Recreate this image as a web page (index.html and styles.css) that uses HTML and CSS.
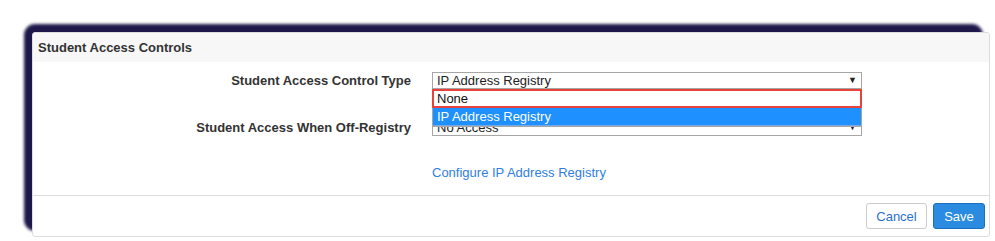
FILE: index.html
```html
<!DOCTYPE html>
<html>
<head>
<meta charset="utf-8">
<link rel="stylesheet" href="styles.css">
</head>
<body>
<div class="stage">
  <div class="panel">
    <div class="panel-heading">Student Access Controls</div>
    <div class="panel-body">
      <div class="form-row">
        <label class="form-label">Student Access Control Type</label>
        <div class="field">
          <div class="select">
            <span class="select-value">IP Address Registry</span>
            <span class="caret">▼</span>
          </div>
          <ul class="dropdown">
            <li class="option option-focus">None</li>
            <li class="option option-selected">IP Address Registry</li>
          </ul>
        </div>
      </div>
      <div class="form-row row-second">
        <label class="form-label">Student Access When Off-Registry</label>
        <div class="field">
          <div class="select">
            <span class="select-value">No Access</span>
            <span class="caret">▼</span>
          </div>
        </div>
      </div>
      <div class="form-row row-link">
        <span class="form-label"></span>
        <div class="field">
          <a class="link" href="#">Configure IP Address Registry</a>
        </div>
      </div>
    </div>
    <div class="panel-footer">
      <button class="btn btn-default">Cancel</button>
      <button class="btn btn-primary">Save</button>
    </div>
  </div>
</div>
</body>
</html>
```

FILE: styles.css
```css
html {
  margin: 0;
  padding: 0;
  background: #ffffff;
}
body {
  margin: 0;
  padding: 0;
  font-family: "Liberation Sans", Arial, sans-serif;
  color: #333333;
  width: 995px;
  height: 241px;
  overflow: hidden;
}
.stage {
  padding: 32px 5px 0 32px;
}
.panel {
  position: relative;
  background: #ffffff;
  border: 1px solid #dddddd;
  border-radius: 3px;
}
.panel::before {
  content: "";
  position: absolute;
  left: -9px;
  top: -9px;
  right: 6px;
  bottom: 5px;
  border-radius: 11px;
  background: #1d1849;
  filter: blur(1.8px);
  z-index: -1;
}
.panel-heading {
  background: #f7f7f7;
  height: 29px;
  box-sizing: border-box;
  padding: 7px 5px 0 5px;
  font-size: 13px;
  font-weight: bold;
  line-height: 15px;
  border-radius: 3px 3px 0 0;
}
.panel-body {
  padding: 10px 0 14px 0;
}
.form-row {
  display: flex;
  align-items: center;
  gap: 21px;
}
.row-second {
  margin-top: 30px;
}
.row-link {
  margin-top: 27px;
}
.form-label {
  width: 378px;
  flex: none;
  text-align: right;
  font-size: 13px;
  font-weight: bold;
  color: #333333;
}
.field {
  position: relative;
  width: 430px;
}
.select {
  height: 17px;
  box-sizing: border-box;
  border: 1px solid #a6a6a6;
  background: #ffffff;
  display: flex;
  align-items: center;
  justify-content: space-between;
  padding: 0 4px 0 4px;
  font-size: 13px;
  color: #222222;
}
.select-value {
  line-height: 15px;
}
.caret {
  font-size: 9px;
  color: #222222;
  line-height: 15px;
}
.dropdown {
  position: absolute;
  left: 0;
  top: 17px;
  width: 430px;
  margin: 0;
  padding: 0;
  list-style: none;
  background: #ffffff;
  border: 1px solid #a6a6a6;
  border-top: none;
  box-sizing: border-box;
  z-index: 2;
  font-size: 13px;
}
.option {
  height: 17px;
  line-height: 17px;
  padding: 0 4px;
  color: #111111;
}
.option-focus {
  height: 19px;
  line-height: 15px;
  box-sizing: border-box;
  border: 2px solid #e8423b;
  margin: 0 -1px;
  padding: 0 3px;
}
.option-selected {
  background: #1e90ff;
  color: #ffffff;
  border-bottom: 1px solid #7aa7e6;
}
.link {
  font-size: 13px;
  line-height: 17px;
  color: #2f7ee0;
  text-decoration: none;
}
.panel-footer {
  border-top: 1px solid #dddddd;
  padding: 7px 4px 7px 0;
  display: flex;
  justify-content: flex-end;
  gap: 6px;
}
.btn {
  height: 26px;
  box-sizing: border-box;
  font-family: "Liberation Sans", Arial, sans-serif;
  font-size: 13px;
  border-radius: 3px;
  padding: 0 8px;
  cursor: pointer;
}
.btn-default {
  width: 61px;
  background: #ffffff;
  border: 1px solid #cccccc;
  color: #2a6fc9;
}
.btn-primary {
  width: 52px;
  background: #2b8be0;
  border: 1px solid #1f6fbf;
  color: #ffffff;
  font-weight: normal;
}
```
